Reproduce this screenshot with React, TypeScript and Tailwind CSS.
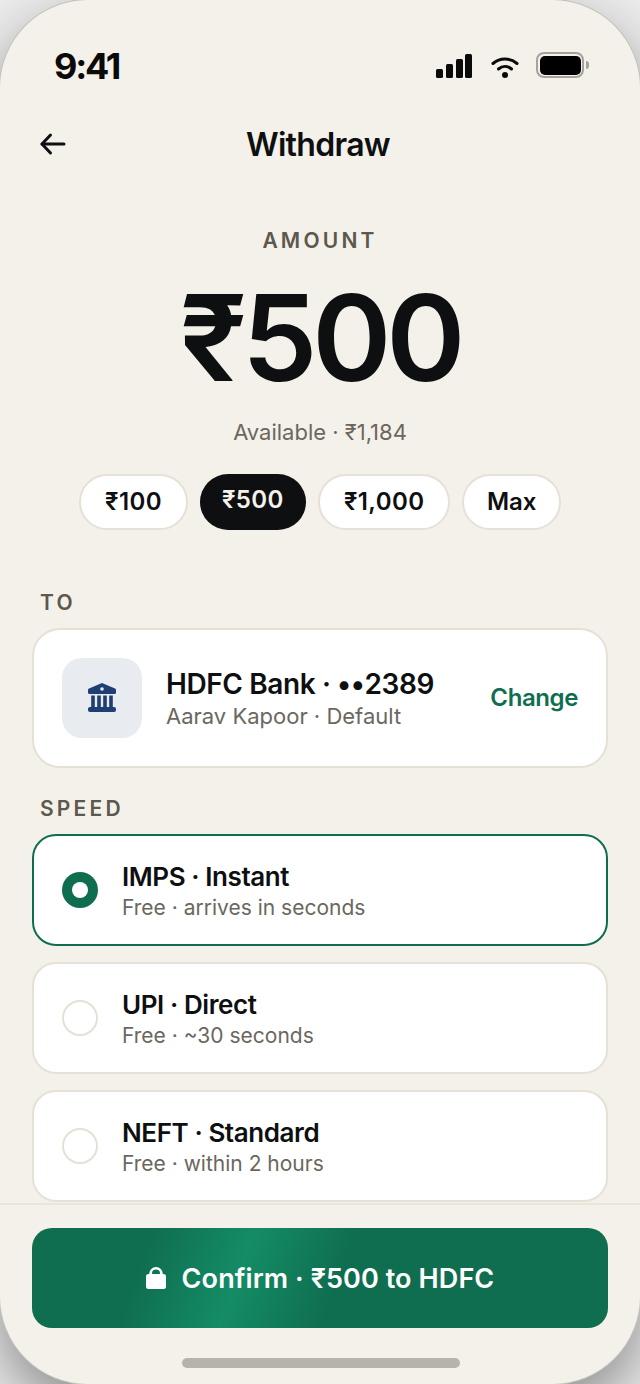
const sans = "font-['Inter','Noto_Sans',sans-serif]";

function Pill({ label, active, plain }: { label: string; active?: boolean; plain?: boolean }) {
  return active ? (
    <div className="flex h-[56px] w-[106px] items-start justify-center rounded-full bg-[#0e0f11] pt-[11px] text-[24px] leading-[30px] font-semibold tracking-[0.4px] text-[#f4f1ea]">
      {label}
    </div>
  ) : (
    <div
      className={
        "flex h-[56px] items-center justify-center rounded-full border-2 border-[#e6e1d6] bg-white text-[24px] font-semibold text-[#0e0f11] " +
        (plain ? "px-[22.5px]" : "px-[24px] tracking-[0.4px]")
      }
    >
      {label}
    </div>
  );
}

function Speed({ title, sub, active }: { title: string; sub: string; active?: boolean }) {
  return (
    <div
      className={
        "flex h-[112px] items-center gap-[24px] rounded-[24px] border-2 bg-white px-[28px] " +
        (active ? "border-[#0f6e50]" : "border-[#e6e1d6]")
      }
    >
      {active ? (
        <div className="flex h-[36px] w-[36px] items-center justify-center rounded-full bg-[#0f6e50]">
          <div className="h-[16px] w-[16px] rounded-full bg-white" />
        </div>
      ) : (
        <div className="h-[36px] w-[36px] rounded-full border-2 border-[#e6e1d6]" />
      )}
      <div className="flex flex-col pt-[4px]">
        <div className="text-[26px] leading-[30px] font-[560] tracking-[-0.42px] text-[#0e0f11]">{title}</div>
        <div className="mt-[2px] text-[21px] leading-[28px] text-[#6b675e]">{sub}</div>
      </div>
    </div>
  );
}

export default function App() {
  return (
    <div className="h-[1384px] w-[640px] overflow-hidden bg-[#ececec]">
      <div className={"flex h-[1384px] w-[640px] flex-col overflow-hidden rounded-[88px] bg-[#f4f1ea] shadow-[0_0_0_1px_#c4c2bd,0_24px_60px_rgba(0,0,0,0.42)] " + sans}>
        <div className="flex h-[128px] shrink-0 items-start justify-between pr-[51px] pl-[54px] pt-[44px]">
          <div className="text-[36px] leading-[44px] font-[750] tracking-[-2.2px] text-[#0a0a0a]">9:41</div>
          <div className="flex items-start pt-[8px]">
            <svg className="mt-[2px]" width="36" height="24" viewBox="0 0 36 24" fill="#0a0a0a">
              <rect x="0" y="15" width="7" height="9" rx="1.5" />
              <rect x="10" y="10" width="7" height="14" rx="1.5" />
              <rect x="20" y="5" width="7" height="19" rx="1.5" />
              <rect x="29" y="0" width="7" height="24" rx="1.5" />
            </svg>
            <svg className="mt-[5px] ml-[19px]" width="28" height="21" viewBox="0 0 28 21" fill="none" stroke="#0a0a0a" strokeWidth="3" strokeLinecap="round">
              <path d="M2 6.5c7-6 17-6 24 0" />
              <path d="M7.5 12c4-3.4 9-3.4 13 0" />
              <circle cx="14" cy="18" r="3" fill="#0a0a0a" stroke="none" />
            </svg>
            <div className="ml-[17px] flex items-center">
              <div className="flex h-[26px] w-[48px] items-center justify-center rounded-[8px] border-2 border-[#a5a29b] p-[1.5px]">
                <div className="h-full w-full rounded-[5px] bg-black" />
              </div>
              <div className="ml-[2px] h-[8px] w-[3px] rounded-r-[3px] bg-[#a5a29b]" />
            </div>
          </div>
        </div>

        <div className="relative flex h-[32px] shrink-0 items-center justify-center">
          <svg className="absolute left-[37px]" width="32" height="32" viewBox="0 0 32 32" fill="none" stroke="#0e0f11" strokeWidth="3" strokeLinecap="round" strokeLinejoin="round">
            <path d="M27 16H5" />
            <path d="M13.5 7 5 16l8.5 9" />
          </svg>
          <div className="mt-[2px] mr-[4px] text-[32px] leading-[40px] font-semibold tracking-[-0.7px] text-[#0e0f11]">Withdraw</div>
        </div>

        <div className="mt-[67px] flex shrink-0 flex-col items-center">
          <div className="text-[21px] leading-[28px] font-semibold tracking-[3.2px] text-[#5c584e]">AMOUNT</div>
          <div className="mt-[13px] text-[120px] leading-[140px] font-[640] tracking-[-5.2px] text-[#0e0f11]">₹500</div>
          <div className="mt-[10px] text-[22px] leading-[28px] text-[#6b675e]">Available · ₹1,184</div>
          <div className="mt-[28px] flex gap-[12px]">
            <Pill label="₹100" />
            <Pill label="₹500" active />
            <Pill label="₹1,000" />
            <Pill label="Max" plain />
          </div>
        </div>

        <div className="mt-[59px] flex shrink-0 flex-col px-[32px]">
          <div className="pl-[8px] text-[21px] leading-[28px] font-semibold tracking-[3.2px] text-[#5c584e]">TO</div>
          <div className="mt-[11px] flex h-[140px] items-center rounded-[28px] border-2 border-[#e6e1d6] bg-white pr-[28px] pl-[28px]">
            <div className="flex h-[80px] w-[80px] items-center justify-center rounded-[20px] bg-[#e8ebf0]">
              <svg width="32" height="32" viewBox="0 0 32 32" fill="#1f3f73">
                <path d="M16 1 3 6.6A1.6 1.6 0 0 0 2 8.2v2.3A1.5 1.5 0 0 0 3.5 12h25a1.5 1.5 0 0 0 1.5-1.5V8.2a1.6 1.6 0 0 0-1-1.6L16 1Z" />
                <rect x="5.2" y="13.5" width="3.6" height="12" />
                <rect x="11.2" y="13.5" width="3.6" height="12" />
                <rect x="17.2" y="13.5" width="3.6" height="12" />
                <rect x="23.2" y="13.5" width="3.6" height="12" />
                <rect x="2" y="25" width="28" height="5" rx="2" />
                <circle cx="16" cy="7" r="1.8" fill="#e8ebf0" />
              </svg>
            </div>
            <div className="ml-[24px] flex flex-1 flex-col pt-[2px]">
              <div className="text-[28px] leading-[32px] font-[560] tracking-[-0.4px] text-[#0e0f11]">HDFC Bank · ••2389</div>
              <div className="mt-[2px] text-[22px] leading-[28px] text-[#6b675e]">Aarav Kapoor · Default</div>
            </div>
            <div className="text-[24px] font-semibold tracking-[-0.4px] text-[#0f6e50]">Change</div>
          </div>

          <div className="mt-[27px] pl-[8px] text-[21px] leading-[28px] font-semibold tracking-[3.2px] text-[#5c584e]">SPEED</div>
          <div className="mt-[11px] flex flex-col gap-[16px]">
            <Speed title="IMPS · Instant" sub="Free · arrives in seconds" active />
            <Speed title="UPI · Direct" sub="Free · ~30 seconds" />
            <Speed title="NEFT · Standard" sub="Free · within 2 hours" />
          </div>
        </div>

        <div className="mt-[1px] flex flex-1 flex-col items-center border-t-2 border-[#e9e5db] px-[32px] pt-[23px]">
          <div className="flex h-[100px] w-full items-center justify-center gap-[16px] rounded-[20px] bg-[linear-gradient(110deg,#0f6e50_0%,#0f6e50_20%,#148c66_36.5%,#0f6e50_53%,#0f6e50_100%)] text-[27px] font-semibold tracking-[0.1px] text-white">
            <svg width="20" height="22" viewBox="0 0 20 22" fill="white">
              <path d="M4.6 9V6.7a5.4 5.4 0 0 1 10.8 0V9" fill="none" stroke="white" strokeWidth="2.6" />
              <rect x="0" y="7" width="20" height="15" rx="2.5" />
            </svg>
            <span className="mt-[2px]">Confirm · ₹500 to HDFC</span>
          </div>
          <div className="mt-[30px] ml-[2px] h-[10px] w-[278px] rounded-full bg-[#b5b3ac]" />
        </div>
      </div>
    </div>
  );
}
